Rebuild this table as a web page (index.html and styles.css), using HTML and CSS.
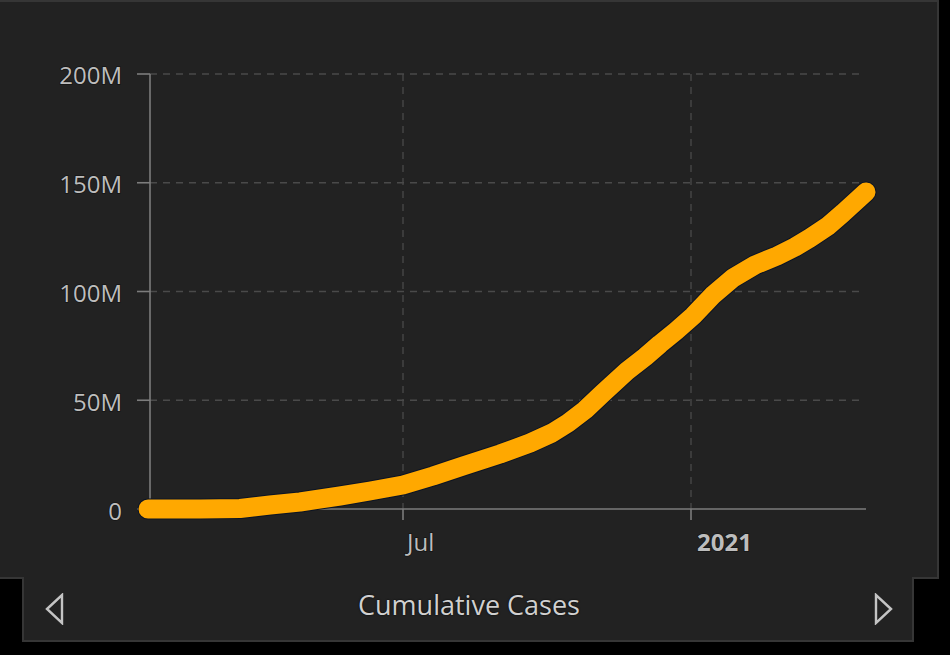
FILE: index.html
```html
<!DOCTYPE html>
<html lang="en">
<head>
<meta charset="utf-8">
<title>Cumulative Cases</title>
<link rel="stylesheet" href="styles.css">
</head>
<body>
<div class="panel chart-panel">
  <svg class="chart" width="937" height="575" viewBox="0 2 937 575" xmlns="http://www.w3.org/2000/svg">
    <g class="grid">
      <line x1="150" y1="74" x2="863" y2="74"/>
      <line x1="150" y1="182.75" x2="863" y2="182.75"/>
      <line x1="150" y1="291.5" x2="863" y2="291.5"/>
      <line x1="150" y1="400.25" x2="863" y2="400.25"/>
      <line x1="403" y1="74" x2="403" y2="509"/>
      <line x1="691" y1="74" x2="691" y2="509"/>
    </g>
    <g class="axis">
      <line x1="150" y1="74" x2="150" y2="509"/>
      <line x1="150" y1="509" x2="866" y2="509"/>
      <line x1="137" y1="74" x2="150" y2="74"/>
      <line x1="137" y1="182.75" x2="150" y2="182.75"/>
      <line x1="137" y1="291.5" x2="150" y2="291.5"/>
      <line x1="137" y1="400.25" x2="150" y2="400.25"/>
      <line x1="137" y1="509" x2="150" y2="509"/>
      <line x1="403" y1="509" x2="403" y2="520"/>
      <line x1="691" y1="509" x2="691" y2="520"/>
    </g>
    <g class="ylabels">
      <text x="122" y="84">200M</text>
      <text x="122" y="193">150M</text>
      <text x="122" y="302">100M</text>
      <text x="122" y="410.5">50M</text>
      <text x="122" y="519.5">0</text>
    </g>
    <g class="xlabels">
      <text x="407" y="551">Jul</text>
      <text class="year" x="697" y="551">2021</text>
    </g>
    <polyline class="curve-outline" points="148,509 200,509 240,508.5 270,505 300,502 340,496 370,491 403,485 433,476 463,466 500,454 530,443 552,433 568,423 585,410 603,393 627,371 645,357 660,344 676,331 693,316 713,295 733,278 755,265 777,256 795,247 810,238 828,226 843,213 866,192"/>
    <polyline class="curve" points="148,509 200,509 240,508.5 270,505 300,502 340,496 370,491 403,485 433,476 463,466 500,454 530,443 552,433 568,423 585,410 603,393 627,371 645,357 660,344 676,331 693,316 713,295 733,278 755,265 777,256 795,247 810,238 828,226 843,213 866,192"/>
  </svg>
</div>
<div class="panel nav-bar">
  <button class="nav-btn" type="button" aria-label="Previous">
    <svg width="20" height="32" viewBox="0 0 20 32" xmlns="http://www.w3.org/2000/svg"><polygon class="arrow" points="2,16 17,2 17,30"/></svg>
  </button>
  <div class="nav-title">Cumulative Cases</div>
  <button class="nav-btn" type="button" aria-label="Next">
    <svg width="20" height="32" viewBox="0 0 20 32" xmlns="http://www.w3.org/2000/svg"><polygon class="arrow" points="18,16 3,2 3,30"/></svg>
  </button>
</div>
</body>
</html>
```
FILE: styles.css
```css
html, body {
  margin: 0;
  padding: 0;
  background: #000;
}
body {
  width: 950px;
  height: 655px;
  overflow: hidden;
  font-family: "Open Sans", "Noto Sans", "Liberation Sans", sans-serif;
}
.panel {
  background: #222222;
  box-sizing: content-box;
}
.chart-panel {
  width: 937px;
  height: 575px;
  border: 2px solid #363636;
  border-left: none;
}
.chart {
  display: block;
}
.grid line {
  stroke: #4a4a4a;
  stroke-width: 1.3;
  stroke-dasharray: 7 6;
}
.axis line {
  stroke: #7c7c7c;
  stroke-width: 1.6;
}
.ylabels text,
.xlabels text {
  font-family: "Open Sans", "Noto Sans", sans-serif;
  font-size: 24px;
  font-weight: 500;
  fill: #bdbdbd;
  paint-order: stroke;
  stroke: #141414;
  stroke-width: 1.5px;
}
.ylabels text {
  text-anchor: end;
}
.xlabels .year {
  font-weight: 700;
}
.curve-outline {
  fill: none;
  stroke: #0c1424;
  stroke-width: 21;
  stroke-linecap: round;
  stroke-linejoin: round;
}
.curve {
  fill: none;
  stroke: #ffa800;
  stroke-width: 19;
  stroke-linecap: round;
  stroke-linejoin: round;
}
.nav-bar {
  margin-left: 22px;
  margin-top: -2px;
  width: 848px;
  height: 63px;
  padding: 0 19px 0 21px;
  border: 2px solid #363636;
  border-top: none;
  display: flex;
  align-items: center;
}
.nav-btn {
  display: flex;
  padding: 0;
  margin: 0;
  border: none;
  background: none;
  cursor: pointer;
}
.arrow {
  fill: none;
  stroke: #c4c4c4;
  stroke-width: 2.4;
  stroke-linejoin: miter;
}
.nav-title {
  flex: 1;
  text-align: center;
  font-size: 27px;
  font-weight: 500;
  color: #d0d0d0;
  padding-bottom: 9px;
  text-shadow: 0 0 2px #000;
}
```
